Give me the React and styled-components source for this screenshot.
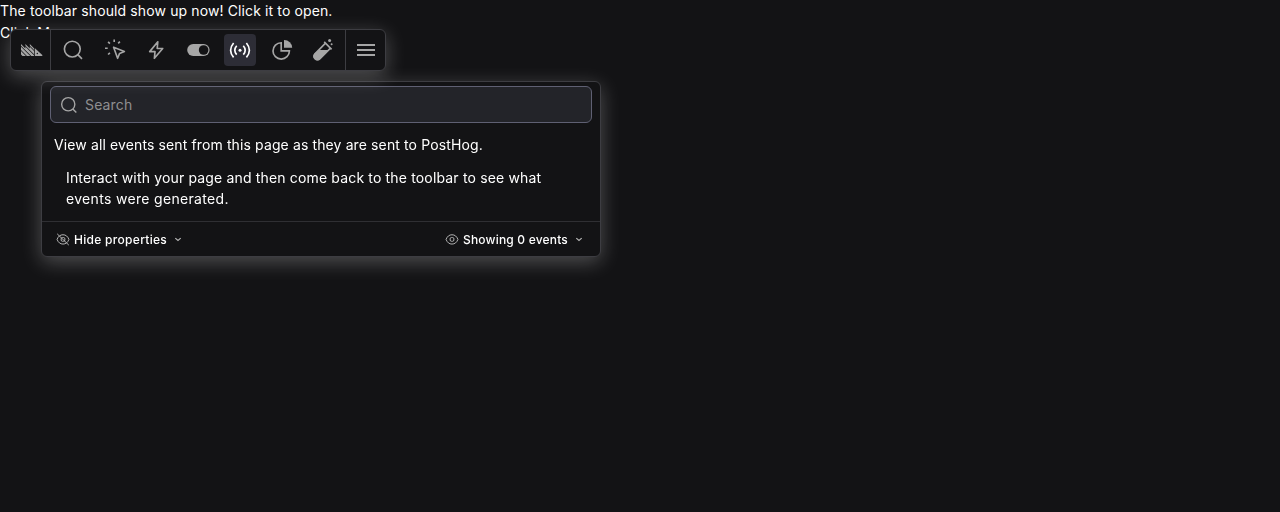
import React from "react";
import styled, { createGlobalStyle, css } from "styled-components";

const GlobalStyle = createGlobalStyle`
  *, *::before, *::after { box-sizing: border-box; }
  body {
    margin: 0;
    background: #131315;
    color: #fff;
    font-family: Inter, "Liberation Sans", sans-serif;
    font-size: 14px;
    line-height: 22px;
    letter-spacing: 0.12px;
  }
`;

const floating = css`
  background: #131315;
  border: 1px solid #3d3d42;
  border-radius: 6px;
  box-shadow: 0 5px 20px rgba(255, 255, 255, 0.26);
`;

const Page = styled.main`
  min-height: 512px;
`;

const Toolbar = styled.nav`
  ${floating}
  position: fixed;
  top: 29px;
  left: 10px;
  display: flex;
  width: 376px;
  height: 42px;
  color: #a6a6a6;
`;

const ToolbarSection = styled.div`
  display: flex;
  align-items: center;
  justify-content: space-around;
  flex: ${(p) => (p.$width ? `0 0 ${p.$width}px` : "1")};
  & + & {
    border-left: 1px solid #3d3d42;
  }
`;

const IconButton = styled.button`
  display: flex;
  align-items: center;
  justify-content: center;
  width: 32px;
  height: 32px;
  padding: 0;
  border: 0;
  border-radius: 4px;
  color: ${(p) => (p.$active ? "#fff" : "inherit")};
  background: ${(p) => (p.$active ? "#2d2d36" : "transparent")};
`;

const Icon = styled.svg`
  flex: none;
  fill: none;
  stroke: currentColor;
  stroke-width: ${(p) => p.$weight || 1.65};
`;

const Panel = styled.section`
  ${floating}
  position: fixed;
  top: 81px;
  left: 41px;
  display: flex;
  flex-direction: column;
  width: 560px;
  height: 176px;
`;

const SearchField = styled.label`
  display: flex;
  align-items: center;
  gap: 7px;
  height: 37px;
  margin: 4px 8px 0;
  padding: 0 7px;
  border: 1px solid #5f6073;
  border-radius: 6px;
  background: #232429;
  color: #a6a6a6;
`;

const SearchInput = styled.input`
  flex: 1;
  padding: 0;
  border: 0;
  outline: 0;
  background: transparent;
  color: #fff;
  font: inherit;
  letter-spacing: 0.15px;
  &::placeholder {
    color: #8f8f91;
    opacity: 1;
  }
`;

const Description = styled.p`
  margin: 11px 12px 0;
  line-height: 21px;
`;

const Hint = styled.p`
  margin: 12px 24px 0;
  line-height: 21px;
  letter-spacing: 0.16px;
`;

const HintEnding = styled.span`
  letter-spacing: 0.32px;
`;

const Footer = styled.footer`
  display: flex;
  align-items: center;
  justify-content: space-between;
  height: 35px;
  margin-top: auto;
  padding: 1px 14px 0;
  border-top: 1px solid #2f2f33;
`;

const FooterButton = styled.button`
  display: flex;
  align-items: center;
  gap: 4px;
  padding: 0;
  border: 0;
  background: transparent;
  color: #fff;
  font: 500 12px/20px Inter, sans-serif;
  letter-spacing: ${(p) => p.$tracking}px;
  svg {
    color: #b5b5b5;
  }
`;

const Glyph = ({ size = 24, weight, children }) => (
  <Icon width={size} height={size} viewBox="0 0 24 24" $weight={weight}>
    {children}
  </Icon>
);

const Search = ({ size }) => (
  <Glyph size={size}>
    <circle cx="12.3" cy="11.1" r="7.9" />
    <path d="M17.8 16.7 22 20.9" />
  </Glyph>
);

const Logo = () => (
  <Icon width="22" height="12" viewBox="0 0 22 12">
    <defs>
      <clipPath id="spines">
        <path d="M0 0 4.4 4.4V0L8.8 4.4V0L13.2 4.4V12H0Z" />
      </clipPath>
    </defs>
    <g clipPath="url(#spines)" strokeWidth="2.4">
      <path d="M-1-1 14 14M3.4-1 18.4 14M7.8-1 22.8 14M-1 3.4 10 14.4M-1 7.8 6 14.8" />
    </g>
    <path d="M13.9 4.2 21.3 11V12H13.9Z" fill="currentColor" stroke="none" />
    <circle cx="16.3" cy="9.5" r=".7" fill="#131315" stroke="none" />
  </Icon>
);

const LogoSlot = styled.span`
  display: flex;
  padding-left: 2px;
`;

const CursorClick = () => (
  <Glyph>
    <path d="M11.6 9.2 22.4 13.4 17.6 15.4 15.6 20.3Z" strokeLinejoin="round" />
    <path d="M12.2 1.5V4M17.9 3.6 16.2 5.4M6.1 3.9 7.9 5.7M3 10.2H5.7M7.9 14.8 6.1 16.5" />
  </Glyph>
);

const Bolt = () => (
  <Glyph>
    <path d="M13.8 3.8 5.7 13.6H11L10.4 20.3 18.7 10.5H13.2Z" strokeLinejoin="round" />
  </Glyph>
);

const Toggle = () => (
  <Glyph>
    <rect x="1.2" y="6" width="22.4" height="12" rx="6" fill="currentColor" stroke="none" />
    <circle cx="17.6" cy="12" r="4.8" fill="#131315" stroke="none" />
  </Glyph>
);

const Live = () => (
  <Glyph>
    <circle cx="12" cy="12.2" r="1.5" fill="currentColor" stroke="none" />
    <path d="M5.6 5Q-.4 12.2 5.6 19.4M18.4 5Q24.4 12.2 18.4 19.4M8.7 7.8Q4.9 12.2 8.7 16.6M15.3 7.8Q19.1 12.2 15.3 16.6" />
  </Glyph>
);

const Pie = () => (
  <Glyph>
    <path d="M11.2 4.7A8.2 8.2 0 1 0 19.4 12.9H11.2Z" />
    <path d="M14 2A8 7.8 0 0 1 22.2 9.7H14Z" fill="currentColor" stroke="none" />
  </Glyph>
);

const TestTube = () => (
  <Glyph>
    <path d="M12.2 3.8 19.6 11.3M13.5 5.2 3 15.8A3.4 3.4 0 0 0 8 20.6L18.5 10.2" />
    <path d="M6.9 12H16.7L8.2 21A3.8 3.8 0 0 1 2.4 15.6Z" fill="currentColor" stroke="none" />
    <circle cx="17.6" cy="2.6" r="1.5" fill="currentColor" stroke="none" />
    <circle cx="19.6" cy="6.2" r="1" fill="currentColor" stroke="none" />
  </Glyph>
);

const Menu = () => (
  <Glyph weight={2}>
    <path d="M3 7H21M3 12H21M3 17H21" />
  </Glyph>
);

const Eye = ({ off }) => (
  <Glyph size={14} weight={1.7}>
    <path d="M1.8 11Q5 3 12 3T22.2 11Q19 19 12 19T1.8 11Z" />
    <rect x="8.8" y="7.8" width="6.4" height="6.4" rx="2.2" />
    {off && <path d="M2 1.4 22 20.8" />}
  </Glyph>
);

const Chevron = () => (
  <Icon width="14" height="14" viewBox="0 0 14 14" $weight={1.2}>
    <path d="M4.3 5.1 7 7.5 9.7 5.1" />
  </Icon>
);

const tools = [
  ["Inspect", Search],
  ["Heatmap", CursorClick],
  ["Actions", Bolt],
  ["Feature flags", Toggle],
  ["Events", Live],
  ["Web vitals", Pie],
  ["Experiments", TestTube],
];

export default function App() {
  return (
    <Page>
      <GlobalStyle />
      <div>The toolbar should show up now! Click it to open.</div>
      <div>Click Me</div>
      <Panel>
        <SearchField>
          <Search size={20} />
          <SearchInput placeholder="Search" />
        </SearchField>
        <Description>View all events sent from this page as they are sent to PostHog.</Description>
        <Hint>
          Interact with your page and then come back to the toolbar to see what{" "}
          <HintEnding>events were generated.</HintEnding>
        </Hint>
        <Footer>
          <FooterButton $tracking={0.3}>
            <Eye off />
            Hide properties
            <Chevron />
          </FooterButton>
          <FooterButton $tracking={0.19}>
            <Eye />
            Showing 0 events
            <Chevron />
          </FooterButton>
        </Footer>
      </Panel>
      <Toolbar>
        <ToolbarSection $width={39}>
          <LogoSlot>
            <Logo />
          </LogoSlot>
        </ToolbarSection>
        <ToolbarSection>
          {tools.map(([name, Glyphic]) => (
            <IconButton key={name} aria-label={name} $active={name === "Events"}>
              <Glyphic />
            </IconButton>
          ))}
        </ToolbarSection>
        <ToolbarSection $width={40}>
          <IconButton aria-label="Menu">
            <Menu />
          </IconButton>
        </ToolbarSection>
      </Toolbar>
    </Page>
  );
}
